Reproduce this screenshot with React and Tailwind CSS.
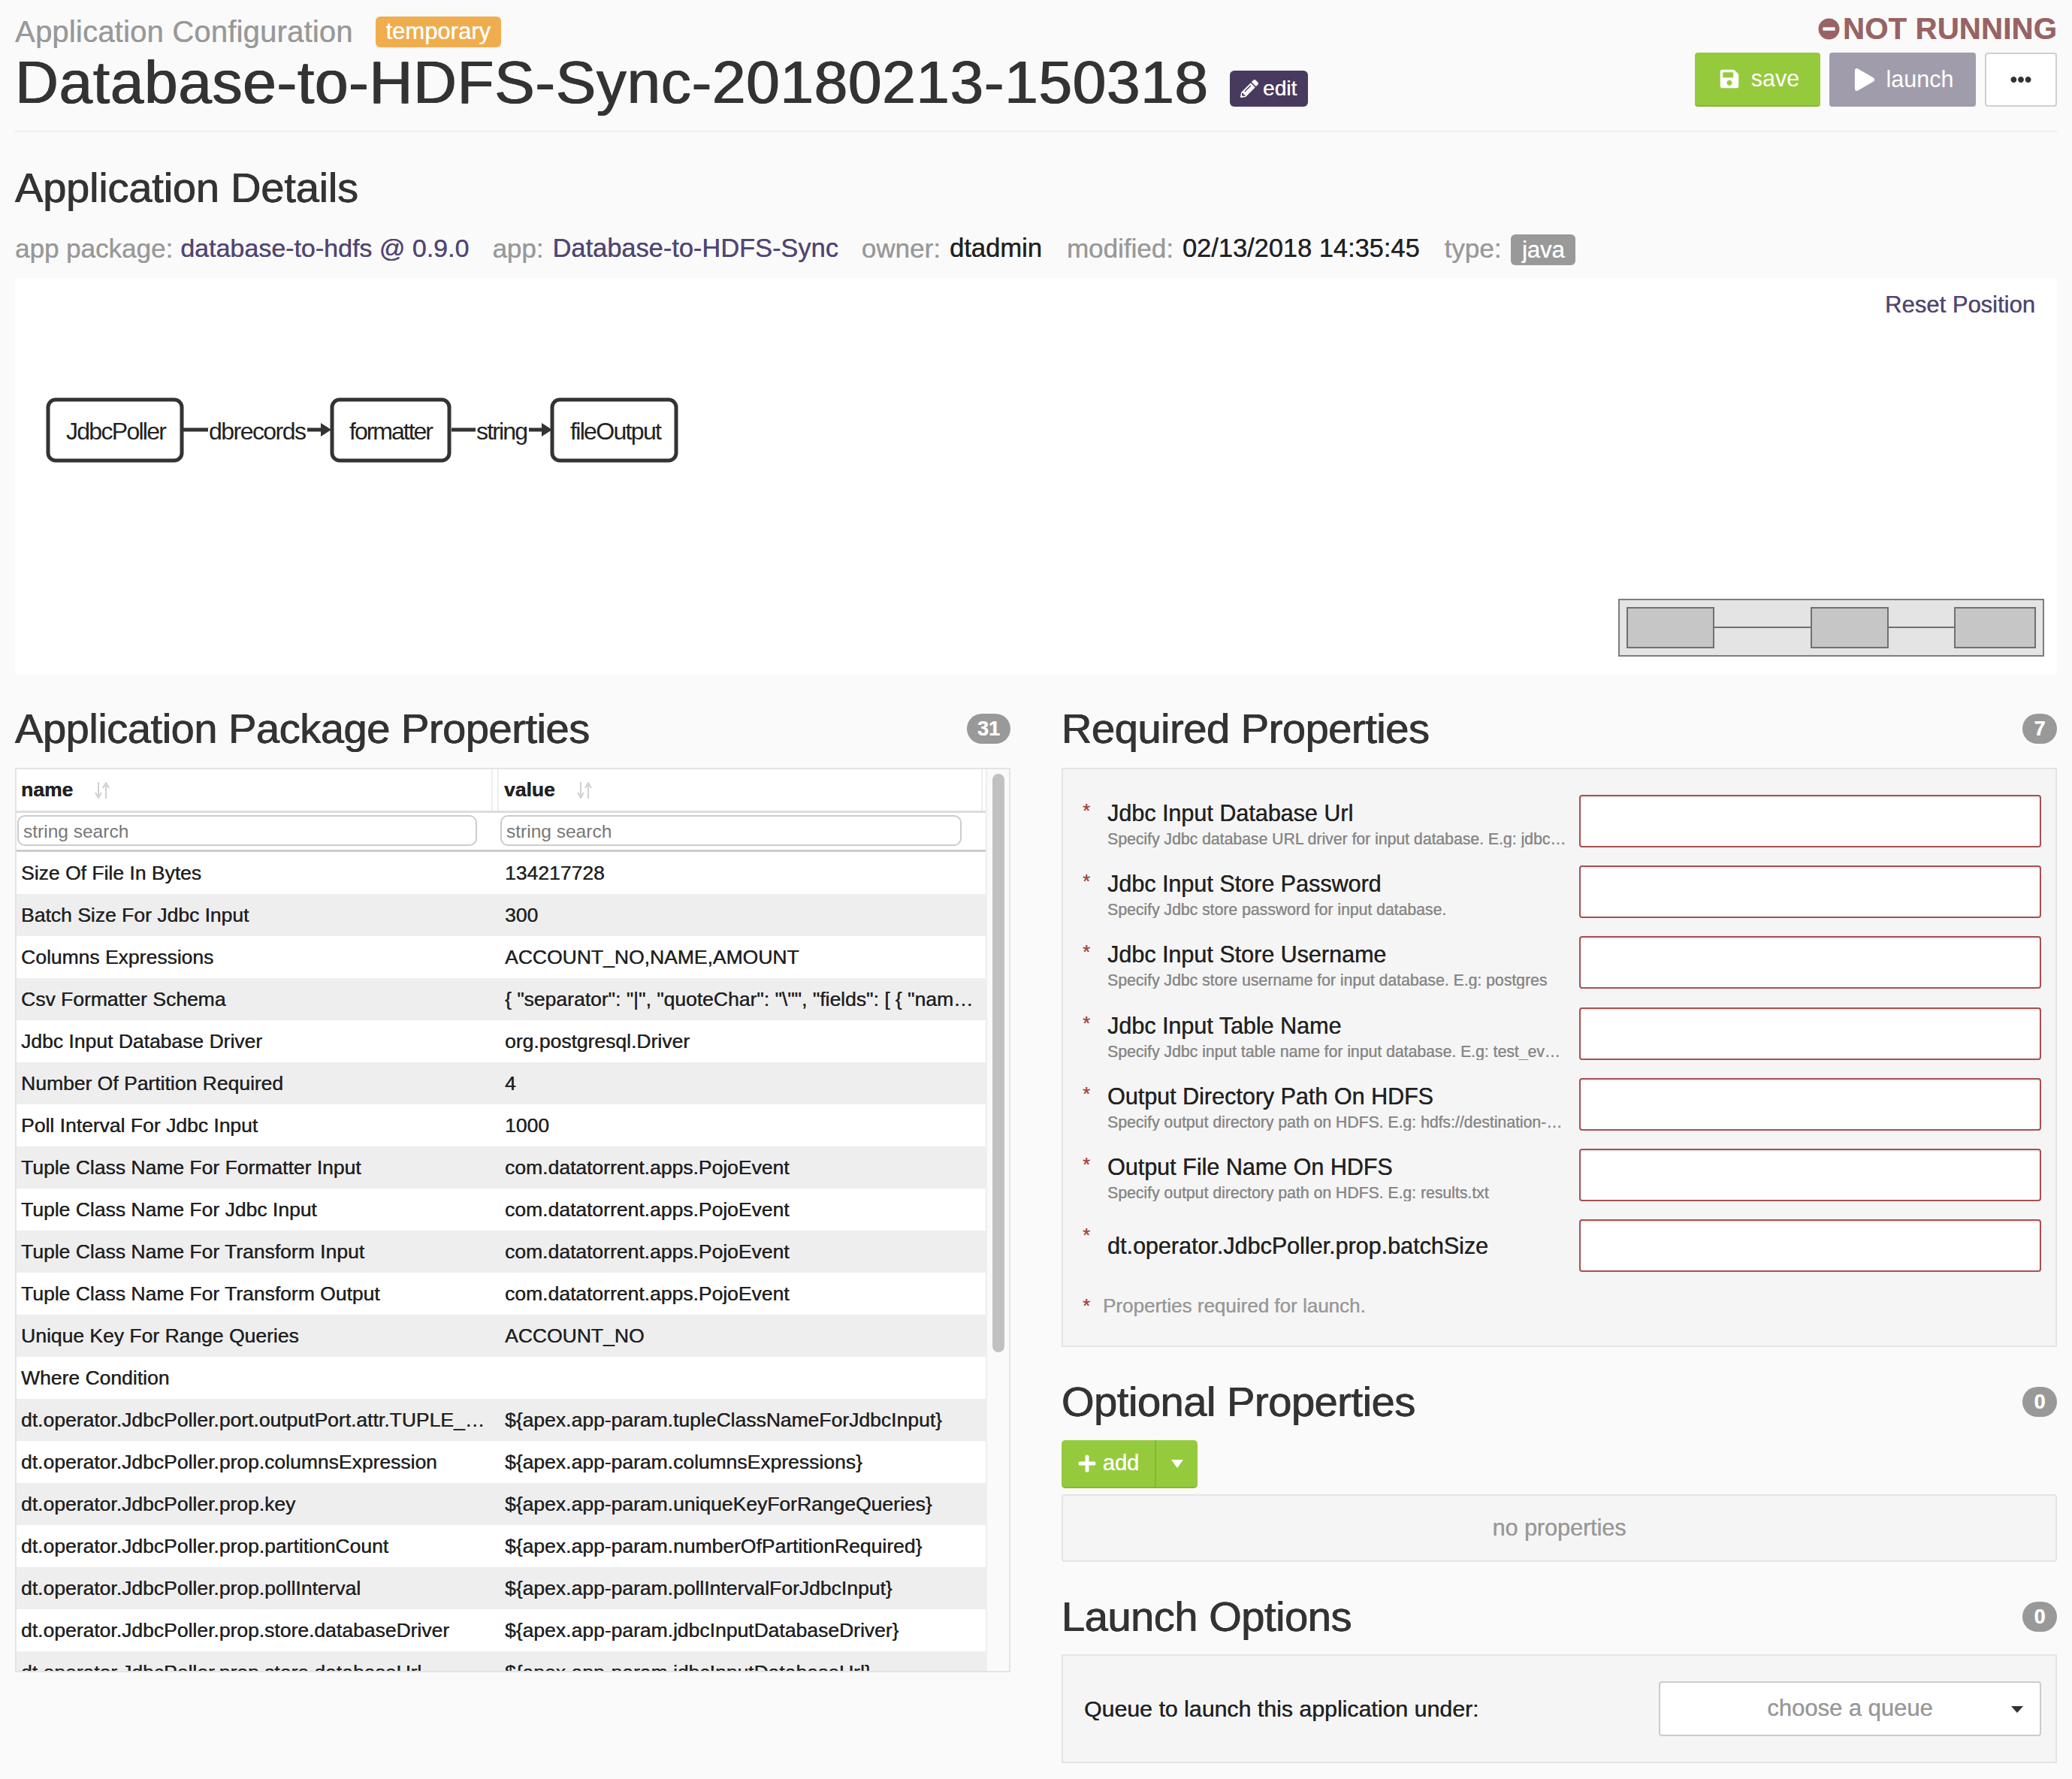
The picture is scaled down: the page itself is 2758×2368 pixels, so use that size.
import React from "react";
import { FaSave, FaPlay, FaPlus, FaPencilAlt, FaMinusCircle, FaEllipsisH } from "react-icons/fa";

const rows = [
  ["Size Of File In Bytes", "134217728"],
  ["Batch Size For Jdbc Input", "300"],
  ["Columns Expressions", "ACCOUNT_NO,NAME,AMOUNT"],
  ["Csv Formatter Schema", '{ "separator": "|", "quoteChar": "\\"", "fields": [ { "name": "ACCOUNT_NO", "type": "Integer" } ] }'],
  ["Jdbc Input Database Driver", "org.postgresql.Driver"],
  ["Number Of Partition Required", "4"],
  ["Poll Interval For Jdbc Input", "1000"],
  ["Tuple Class Name For Formatter Input", "com.datatorrent.apps.PojoEvent"],
  ["Tuple Class Name For Jdbc Input", "com.datatorrent.apps.PojoEvent"],
  ["Tuple Class Name For Transform Input", "com.datatorrent.apps.PojoEvent"],
  ["Tuple Class Name For Transform Output", "com.datatorrent.apps.PojoEvent"],
  ["Unique Key For Range Queries", "ACCOUNT_NO"],
  ["Where Condition", ""],
  ["dt.operator.JdbcPoller.port.outputPort.attr.TUPLE_CLASS", "${apex.app-param.tupleClassNameForJdbcInput}"],
  ["dt.operator.JdbcPoller.prop.columnsExpression", "${apex.app-param.columnsExpressions}"],
  ["dt.operator.JdbcPoller.prop.key", "${apex.app-param.uniqueKeyForRangeQueries}"],
  ["dt.operator.JdbcPoller.prop.partitionCount", "${apex.app-param.numberOfPartitionRequired}"],
  ["dt.operator.JdbcPoller.prop.pollInterval", "${apex.app-param.pollIntervalForJdbcInput}"],
  ["dt.operator.JdbcPoller.prop.store.databaseDriver", "${apex.app-param.jdbcInputDatabaseDriver}"],
  ["dt.operator.JdbcPoller.prop.store.databaseUrl", "${apex.app-param.jdbcInputDatabaseUrl}"],
];

const required = [
  ["Jdbc Input Database Url", "Specify Jdbc database URL driver for input database. E.g: jdbc:postgresql://localhost"],
  ["Jdbc Input Store Password", "Specify Jdbc store password for input database."],
  ["Jdbc Input Store Username", "Specify Jdbc store username for input database. E.g: postgres"],
  ["Jdbc Input Table Name", "Specify Jdbc input table name for input database. E.g: test_event_table"],
  ["Output Directory Path On HDFS", "Specify output directory path on HDFS. E.g: hdfs://destination-namenode-service"],
  ["Output File Name On HDFS", "Specify output directory path on HDFS. E.g: results.txt"],
  ["dt.operator.JdbcPoller.prop.batchSize", ""],
];

function Count({ children }) {
  return (
    <span className="flex h-[40px] min-w-[46px] items-center justify-center rounded-full bg-[#999999] px-[14px] text-[27px] font-bold leading-none text-white">
      {children}
    </span>
  );
}

function SectionHead({ title, count }) {
  return (
    <div className="flex h-[60px] items-center justify-between">
      <h2 className="text-[56px] leading-[60px] tracking-[-0.45px] text-[#333333] [text-shadow:0.5px_0_0_#333333,-0.4px_0_0_#333333]">{title}</h2>
      <Count>{count}</Count>
    </div>
  );
}

function SortIcon() {
  return (
    <svg width="20" height="22" viewBox="0 0 20 22" className="ml-[29px]" fill="none" stroke="#d0d0d0" strokeWidth="2">
      <path d="M5 0v18M1 14l4 7 4-7" />
      <path d="M15 22V4M11 8l4-7 4 7" />
    </svg>
  );
}

function Diagram() {
  const text = "fill-[#222222] text-[32px] [text-shadow:none]";
  return (
    <svg width="960" height="300" className="absolute left-[-20px] top-0" fill="none">
      <g stroke="#333333" strokeWidth="5" fill="#ffffff">
        <rect x="64" y="162" width="178" height="81" rx="10" />
        <rect x="442" y="162" width="156" height="81" rx="10" />
        <rect x="735" y="162" width="165" height="81" rx="10" />
      </g>
      <g stroke="#333333" strokeWidth="5">
        <path d="M244 202h33M409 202h20M601 202h32M704 202h19" />
      </g>
      <path d="M427 193l14 9-14 9zM721 193l14 9-14 9z" fill="#333333" />
      <text x="88" y="215" textLength="134" className={text}>JdbcPoller</text>
      <text x="278" y="215" textLength="130" className={text}>dbrecords</text>
      <text x="465" y="215" textLength="112" className={text}>formatter</text>
      <text x="634" y="215" textLength="69" className={text}>string</text>
      <text x="759" y="215" textLength="122" className={text}>fileOutput</text>
    </svg>
  );
}

function Minimap() {
  return (
    <svg width="567" height="77" className="absolute bottom-[24px] right-[17px]" fill="none">
      <rect x="1" y="1" width="565" height="75" fill="#e4e4e4" stroke="#7d7d7d" strokeWidth="2" />
      <path d="M128 38h128M360 38h87" stroke="#707070" strokeWidth="2" />
      <g fill="#c6c6c6" stroke="#707070" strokeWidth="2">
        <rect x="12" y="12" width="115" height="53" />
        <rect x="257" y="12" width="102" height="53" />
        <rect x="448" y="12" width="107" height="53" />
      </g>
    </svg>
  );
}

export default function App() {
  return (
    <div className="min-h-[2368px] bg-[#fafafa] px-[20px] font-['Liberation_Sans',Arial,sans-serif] text-[#333333] [text-shadow:0.25px_0_0_currentColor]">
      <header className="flex h-[176px] justify-between border-b-2 border-[#eeeeee]">
        <div className="pt-[22px]">
          <div className="flex h-[41px] items-center">
            <span className="text-[40px] leading-[41px] tracking-[0.2px] text-[#999999]">Application Configuration</span>
            <span className="ml-[30px] flex h-[41px] w-[167px] items-center justify-center rounded-[6px] bg-[#f0ad4e] text-[31px] text-white">temporary</span>
          </div>
          <div className="mt-[7px] flex h-[80px] items-end">
            <h1 className="text-[80px] leading-[80px] tracking-[0.75px] text-[#333333] [text-shadow:0.8px_0_0_#333333,-0.6px_0_0_#333333]">Database-to-HDFS-Sync-20180213-150318</h1>
            <span className="mb-[8px] ml-[28px] flex h-[48px] w-[104px] items-center justify-center gap-[6px] rounded-[6px] bg-[#483a5e] text-[28px] text-white">
              <FaPencilAlt className="h-[24px] w-[24px]" />edit
            </span>
          </div>
        </div>
        <div className="flex flex-col items-end pt-[22px]">
          <div className="flex h-[32px] items-center gap-[4px] text-[40px] font-bold leading-none tracking-[0.25px] text-[#996363]">
            <FaMinusCircle className="h-[29px] w-[29px]" />
            NOT RUNNING
          </div>
          <div className="mt-[16px] flex h-[72px] gap-[12px]">
            <button className="flex w-[167px] items-center justify-center gap-[15px] rounded-[4px] border-b-2 border-[#85b736] bg-[#96ca3d] pl-[4px] text-[30.5px] text-white">
              <FaSave className="h-[28px] w-[28px]" />save
            </button>
            <button className="flex w-[195px] items-center justify-center gap-[14px] rounded-[4px] bg-[#a09cab] pl-[2px] text-[30.5px] text-white">
              <FaPlay className="h-[30px] w-[30px]" />launch
            </button>
            <button className="flex w-[96px] items-center justify-center rounded-[4px] border-2 border-[#d0d0d0] bg-white text-[#333333]">
              <FaEllipsisH className="h-[28px] w-[28px]" />
            </button>
          </div>
        </div>
      </header>

      <h2 className="mt-[44px] text-[56px] leading-[60px] tracking-[-0.2px] text-[#333333] [text-shadow:0.5px_0_0_#333333,-0.4px_0_0_#333333]">Application Details</h2>
      <div className="mt-[32px] flex h-[41px] items-start text-[35px] leading-[37px] text-[#999999]">
        <span>app package:</span>
        <span className="ml-[10px] text-[34px] text-[#514672]">database-to-hdfs @ 0.9.0</span>
        <span className="ml-[31px]">app:</span>
        <span className="ml-[12px] text-[34.4px] text-[#514672]">Database-to-HDFS-Sync</span>
        <span className="ml-[31px]">owner:</span>
        <span className="ml-[12px] text-[34.6px] text-[#222222]">dtadmin</span>
        <span className="ml-[33px]">modified:</span>
        <span className="ml-[12px] text-[34.4px] text-[#222222]">02/13/2018 14:35:45</span>
        <span className="ml-[33px]">type:</span>
        <span className="ml-[13px] flex h-[41px] w-[86px] items-center justify-center rounded-[6px] bg-[#999999] text-[31px] text-white">java</span>
      </div>

      <section className="relative mt-[17px] h-[528px] bg-white">
        <Diagram />
        <a className="absolute right-[29px] top-[16px] text-[31px] leading-[40px] text-[#514672]">Reset Position</a>
        <Minimap />
      </section>

      <div className="mt-[42px] grid grid-cols-2 gap-[68px]">
        <div>
          <SectionHead title="Application Package Properties" count="31" />
          <div className="mt-[22px] flex h-[1204px] overflow-hidden border-2 border-[#e4e4e4] bg-white">
            <div className="w-[1290px] shrink-0 text-[26.5px] text-[#222222]">
              <div className="flex h-[58px] border-b-[3px] border-[#dddddd] font-bold">
                <div className="flex w-[634px] items-center border-r-2 border-[#eeeeee] pl-[6px]">name<SortIcon /></div>
                <div className="ml-[6px] flex w-[646px] items-center border-x-2 border-[#eeeeee] pl-[7px]">value<SortIcon /></div>
              </div>
              <div className="flex h-[52px] gap-[31px] border-b-[3px] border-[#cccccc] pl-[1px] pt-[3px]">
                <input readOnly placeholder="string search" className="h-[41px] w-[612px] rounded-[10px] border-2 border-[#cccccc] bg-white px-[6px] pt-[2px] text-[24.5px] text-[#777777] outline-none placeholder:text-[#777777]" />
                <input readOnly placeholder="string search" className="h-[41px] w-[614px] rounded-[10px] border-2 border-[#cccccc] bg-white px-[6px] pt-[2px] text-[24.5px] text-[#777777] outline-none placeholder:text-[#777777]" />
              </div>
              {rows.map(([n, v], i) => (
                <div key={n} className={`flex h-[56px] items-center pt-[1px] ${i % 2 ? "bg-[#eeeeee]" : "bg-white"}`}>
                  <div className="w-[650px] truncate pl-[6px] pr-[16px]">{n}</div>
                  <div className="w-[640px] truncate pr-[14px]">{v}</div>
                </div>
              ))}
            </div>
            <div className="flex-1 border-l-2 border-[#eeeeee] bg-[#fafafa] pl-[7px] pt-[6px]">
              <div className="h-[770px] w-[16px] rounded-full bg-[#c1c1c1]" />
            </div>
          </div>
        </div>

        <div>
          <SectionHead title="Required Properties" count="7" />
          <div className="mt-[22px] h-[771px] border-2 border-[#e4e4e4] bg-[#f5f5f5] pl-[26px] pr-[19px] pt-[34px]">
            <div className="flex flex-col gap-[24.2px]">
              {required.map(([label, desc]) => (
                <div key={label} className="flex h-[70px]">
                  <span className="w-[33px] shrink-0 pt-[6px] text-[26px] leading-[30px] text-[#a94442]">*</span>
                  <div className={`flex w-[628px] shrink-0 flex-col pr-[15px] ${desc ? "pt-[5px]" : "justify-center"}`}>
                    <span className="text-[30.5px] leading-[38px] text-[#222222]">{label}</span>
                    {desc && <span className="mt-[2px] truncate text-[21.2px] leading-[28px] text-[#888888]">{desc}</span>}
                  </div>
                  <input readOnly className="h-[70px] flex-1 rounded-[4px] border-2 border-[#a94f52] bg-white shadow-[inset_0_2px_2px_rgba(0,0,0,0.08)] outline-none" />
                </div>
              ))}
            </div>
            <div className="mt-[27px] flex h-[36px] items-center text-[26px] text-[#999999]">
              <span className="w-[27px] text-[#a94442]">*</span>
              Properties required for launch.
            </div>
          </div>

          <div className="mt-[43px]"><SectionHead title="Optional Properties" count="0" /></div>
          <div className="mt-[21px] flex h-[64px] w-[181px] rounded-[5px] border-b-2 border-[#85b736] bg-[#96ca3d] text-[29px] text-white">
            <div className="flex w-[126px] items-center justify-center gap-[8px] border-r-2 border-[#85b736]">
              <FaPlus className="h-[26px] w-[26px]" />add
            </div>
            <div className="flex flex-1 items-center justify-center">
              <span className="h-0 w-0 border-x-[8px] border-t-[11px] border-x-transparent border-t-white" />
            </div>
          </div>
          <div className="mt-[8px] flex h-[90px] items-center justify-center rounded-[4px] border-2 border-[#e4e4e4] bg-[#f5f5f5] text-[30.5px] text-[#999999]">
            no properties
          </div>

          <div className="mt-[43px]"><SectionHead title="Launch Options" count="0" /></div>
          <div className="mt-[20px] flex h-[145px] items-center justify-between border-2 border-[#e4e4e4] bg-[#f5f5f5] pl-[28px] pr-[19px]">
            <span className="text-[30.3px] text-[#222222]">Queue to launch this application under:</span>
            <div className="relative flex h-[73px] w-[509px] items-center justify-center rounded-[4px] border-2 border-[#cccccc] bg-white text-[31px] text-[#999999]">
              choose a queue
              <span className="absolute right-[22px] top-[31px] h-0 w-0 border-x-[8px] border-t-[9px] border-x-transparent border-t-[#333333]" />
            </div>
          </div>
        </div>
      </div>
    </div>
  );
}
